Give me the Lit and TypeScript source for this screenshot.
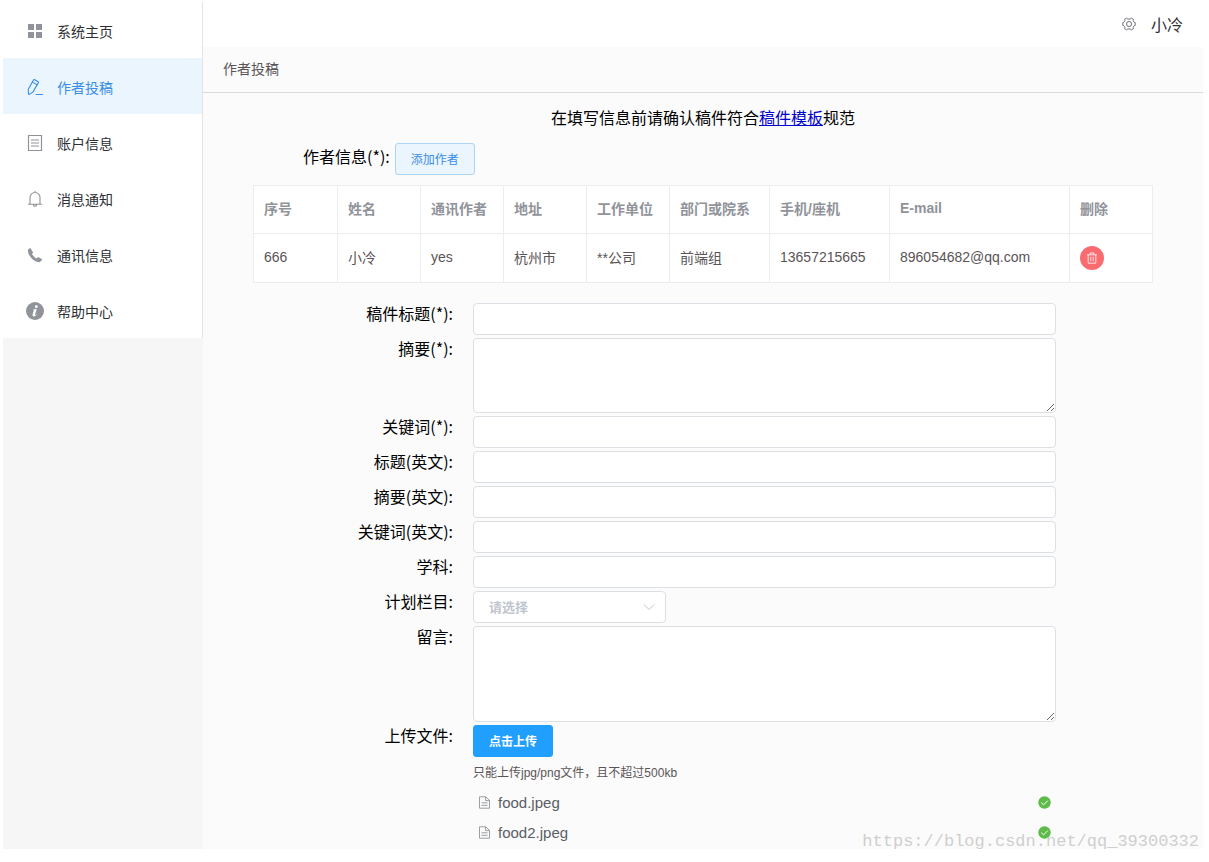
import { LitElement, html, css, svg } from "lit";
import { customElement, state } from "lit/decorators.js";
import { classMap } from "lit/directives/class-map.js";

const icons = {
  menu: svg`<g fill="currentColor"><path d="M2 2h6v6H2zM10 2h6v6h-6zM2 10h6v6H2zM10 10h6v6h-6z"/></g>`,
  edit: svg`<g fill="none" stroke="currentColor" stroke-width="1.100" stroke-linejoin="round" stroke-linecap="round"><path d="M8.400 1.600l3.800 2.200c.3.200.4.500.2.800L6.900 14.100l-3.600 2.200c-.4.200-.7 0-.8-.3L2.200 11.500 7.600 1.800c.2-.3.500-.4.800-.2z"/><path d="M6.400 4.100l4.600 2.700M10 16.500h6.500"/></g>`,
  document: svg`<g fill="none" stroke="currentColor" stroke-width="1.200"><path d="M2.500 1.500h13v15h-13zM5 6h8M5 9h8M5 12h8"/></g>`,
  bell: svg`<g fill="none" stroke="currentColor" stroke-width="1.100" stroke-linecap="round"><path d="M4 14V7.500a5 5 0 0 1 10 0V14M2.300 14.200h13.400M9 2.200V1.200M7.300 14.400a1.700 1.700 0 0 0 3.400 0"/></g>`,
  phone: svg`<path fill="currentColor" d="M3.800 2.200L1.900 3.800C1.600 9.800 7.800 16 13.600 16.200l2.500-2.300c.2-.2.200-.5-.1-.7l-3.400-2c-.2-.1-.5-.1-.7.1l-1.400 1.300C8.700 11.600 6.800 9.700 5.900 7.900l1-1c.2-.2.200-.4.100-.6L4.500 2.300c-.2-.3-.5-.3-.7-.1z"/>`,
  info: svg`<circle cx="9" cy="9" r="9" fill="currentColor"/><g fill="#fff"><circle cx="10.300" cy="4.700" r="1.400"/><path d="M7 7.400l3.700-.5-1.600 5.700c-.2.800.3.800 1.500-.4l.4.400c-1.200 1.400-2.300 2-3.300 1.900-1-.1-1.400-.8-1.100-1.900l1.200-4.200c.1-.4-.1-.5-.9-.6z"/></g>`,
};

const menuItems: { icon: keyof typeof icons; label: string }[] = [
  { icon: "menu", label: "系统主页" },
  { icon: "edit", label: "作者投稿" },
  { icon: "document", label: "账户信息" },
  { icon: "bell", label: "消息通知" },
  { icon: "phone", label: "通讯信息" },
  { icon: "info", label: "帮助中心" },
];

const columns = ["序号", "姓名", "通讯作者", "地址", "工作单位", "部门或院系", "手机/座机", "E-mail", "删除"];

@customElement("app-root")
export class AppRoot extends LitElement {
  @state() private active = "作者投稿";
  @state() private authors = [
    ["666", "小冷", "yes", "杭州市", "**公司", "前端组", "13657215665", "896054682@qq.com"],
  ];
  private files = ["food.jpeg", "food2.jpeg"];

  static styles = css`
    * { box-sizing: border-box; }
    :host {
      display: block;
      font-family: "Liberation Sans", "Noto Sans CJK SC", sans-serif;
      font-size: 14px;
      color: #000;
      background: #fff;
    }
    .page {
      position: relative;
      display: flex;
      min-height: 100vh;
      padding: 2px 6px 13px 3px;
    }
    .sidebar { flex: none; width: 200px; background: #f6f6f6; }
    .menu { background: #fff; border-right: 1px solid #e4e4e6; }
    .menu-item {
      display: flex;
      align-items: center;
      gap: 10px;
      width: 100%;
      height: 56px;
      padding: 2px 20px 0;
      border: 0;
      background: none;
      font: inherit;
      color: #2d2f33;
      cursor: pointer;
    }
    .menu-icon { display: flex; justify-content: center; width: 24px; color: #909399; }
    .active, .active .menu-icon { color: #3a8ee6; }
    .active { background: #eaf5fe; }
    .main { flex: 1; min-width: 0; background: #fbfbfb; }
    .header {
      display: flex;
      align-items: center;
      justify-content: flex-end;
      gap: 15px;
      height: 45px;
      padding: 0 20px 2px;
      background: #fff;
      color: #2d2f33;
      font-size: 16px;
    }
    .crumb {
      margin: 0;
      padding: 0 20px;
      line-height: 45px;
      font-size: 14px;
      font-weight: 400;
      color: #5a5456;
      border-bottom: 1px solid #d9dadc;
    }
    .content { padding: 14px 50px 0; }
    .notice { margin: 0 0 12px; text-align: center; font-size: 16px; line-height: 24px; }
    .notice a { color: #0000cc; text-decoration: underline; }
    .label { font-family: "Noto Sans CJK SC", sans-serif; font-size: 16px; line-height: 20px; }
    .author-bar { display: flex; gap: 5px; padding-left: 50px; margin-bottom: 10px; }
    .author-bar .label { line-height: 26px; }
    .button {
      height: 32px;
      padding: 0 15px 2px;
      border-radius: 3px;
      font: inherit;
      font-size: 12px;
      cursor: pointer;
    }
    .plain { color: #3a8ee6; background: #eaf5fe; border: 1px solid #add4f2; }
    .primary { color: #fff; background: #209fff; border: 1px solid #209fff; font-weight: 700; }
    .table {
      width: 100%;
      table-layout: fixed;
      border-collapse: collapse;
      margin-bottom: 20px;
      background: #fff;
      color: #5a5456;
    }
    .table th, .table td {
      height: 49px;
      padding: 0 10px 3px;
      border: 1px solid #ebeef0;
      text-align: left;
      white-space: nowrap;
    }
    .table th { height: 48px; color: #909399; font-weight: 700; }
    .table .action { padding-bottom: 0; }
    .col-index { width: 84px; }
    .col-dept { width: 100px; }
    .col-phone { width: 120px; }
    .col-mail { width: 180px; }
    .remove {
      display: flex;
      align-items: center;
      justify-content: center;
      width: 24px;
      height: 24px;
      padding: 0;
      border: 0;
      border-radius: 50%;
      background: #fa6b70;
      color: #fff;
      cursor: pointer;
    }
    .form {
      display: grid;
      grid-template-columns: 200px minmax(0, 1fr);
      gap: 3px 20px;
      align-items: start;
      padding-right: 97px;
    }
    .form .label { text-align: right; }
    .field {
      display: block;
      width: 100%;
      height: 32px;
      padding: 0 15px;
      border: 1px solid #dcdfe4;
      border-radius: 4px;
      background: #fff;
      font: inherit;
      outline: none;
    }
    .field:focus { border-color: #409eff; }
    textarea.field { padding: 5px 15px; resize: vertical; }
    .field.abstract { height: 75px; }
    .field.message { height: 96px; }
    .select { position: relative; width: 193px; }
    .select .field { appearance: none; color: #c0c4cc; font-size: 13px; font-weight: 700; }
    .select svg { position: absolute; right: 11px; top: 10px; color: #c0c4cc; pointer-events: none; }
    .hint { margin: 7px 0 6px; font-size: 12px; line-height: 18px; color: #5a5456; }
    .files { list-style: none; margin: 0; padding: 0; }
    .file {
      display: flex;
      align-items: center;
      gap: 7px;
      height: 30px;
      padding: 0 5px 2px;
      font-size: 15px;
      color: #5a5e66;
    }
    .file .done { margin-left: auto; }
    .watermark {
      position: absolute;
      right: 10px;
      bottom: 10px;
      font-family: "Liberation Mono", monospace;
      font-size: 17px;
      line-height: 20px;
      color: #cfcfcf;
      pointer-events: none;
    }
  `;

  private removeAuthor(index: number) {
    this.authors = this.authors.filter((_, i) => i !== index);
  }

  private input(id: string, label: string) {
    return html`<label class="label" for=${id}>${label}:</label><input class="field" id=${id} type="text" />`;
  }

  render() {
    return html`
      <div class="page">
        <aside class="sidebar">
          <nav class="menu">
            ${menuItems.map(
              (m) => html`<button
                class=${classMap({ "menu-item": true, active: m.label === this.active })}
                @click=${() => (this.active = m.label)}
              >
                <span class="menu-icon"><svg width="18" height="18" viewBox="0 0 18 18" aria-hidden="true">${icons[m.icon]}</svg></span>
                <span>${m.label}</span>
              </button>`
            )}
          </nav>
        </aside>
        <main class="main">
          <header class="header">
            <svg width="14" height="14" viewBox="0 0 14 14" fill="none" stroke="#5a5e66" stroke-width="0.900" stroke-linejoin="round" aria-hidden="true">
              <path d="M4.600 1.100C5.500 2.500 8.500 2.500 9.400 1.100L11.400 2.300C10.700 3.800 11.500 5.400 13.200 5.700V8.300C11.500 8.600 10.700 10.200 11.400 11.700L9.400 12.900C8.500 11.500 5.500 11.500 4.600 12.900L2.600 11.700C3.300 10.200 2.500 8.600.8 8.300V5.700C2.500 5.400 3.300 3.800 2.600 2.300Z" />
              <circle cx="7" cy="7" r="2.500" />
            </svg>
            <span>小冷</span>
          </header>
          <h1 class="crumb">作者投稿</h1>
          <div class="content">
            <p class="notice">在填写信息前请确认稿件符合<a href="#template">稿件模板</a>规范</p>
            <div class="author-bar">
              <span class="label">作者信息(*):</span>
              <button class="button plain">添加作者</button>
            </div>
            <table class="table">
              <colgroup>
                <col class="col-index" /><col /><col /><col /><col />
                <col class="col-dept" /><col class="col-phone" /><col class="col-mail" /><col />
              </colgroup>
              <thead>
                <tr>${columns.map((c) => html`<th scope="col">${c}</th>`)}</tr>
              </thead>
              <tbody>
                ${this.authors.map(
                  (row, i) => html`<tr>
                    ${row.map((cell) => html`<td>${cell}</td>`)}
                    <td class="action">
                      <button class="remove" aria-label="删除" @click=${() => this.removeAuthor(i)}>
                        <svg width="12" height="12" viewBox="0 0 12 12" fill="none" stroke="currentColor" stroke-width="0.800" aria-hidden="true">
                          <path d="M1 2.800h10M4 2.800V1h4v1.800M2.200 2.800v8.400h7.600V2.800M4.800 4.800v4.400M7.200 4.800v4.400" />
                        </svg>
                      </button>
                    </td>
                  </tr>`
                )}
              </tbody>
            </table>
            <form class="form" @submit=${(e: Event) => e.preventDefault()}>
              ${this.input("title", "稿件标题(*)")}
              <label class="label" for="abstract">摘要(*):</label>
              <textarea class="field abstract" id="abstract"></textarea>
              ${this.input("keywords", "关键词(*)")}
              ${this.input("title-en", "标题(英文)")}
              ${this.input("abstract-en", "摘要(英文)")}
              ${this.input("keywords-en", "关键词(英文)")}
              ${this.input("subject", "学科")}
              <label class="label" for="column">计划栏目:</label>
              <div class="select">
                <select class="field" id="column"><option>请选择</option></select>
                <svg width="12" height="12" viewBox="0 0 12 12" fill="none" stroke="currentColor" aria-hidden="true"><path d="M1 3.500l5 5 5-5" /></svg>
              </div>
              <label class="label" for="message">留言:</label>
              <textarea class="field message" id="message"></textarea>
              <label class="label" for="upload">上传文件:</label>
              <div>
                <button class="button primary" id="upload" type="button">点击上传</button>
                <p class="hint">只能上传jpg/png文件，且不超过500kb</p>
                <ul class="files">
                  ${this.files.map(
                    (f) => html`<li class="file">
                      <svg width="13" height="13" viewBox="0 0 13 13" fill="none" stroke="#909399" stroke-width="0.900" aria-hidden="true">
                        <path d="M1.500.8h6.300l3.700 3.600v7.800h-10zM7.600.8v3.800h3.900M3.500 6.800h6M3.500 9.300h6" />
                      </svg>
                      <span>${f}</span>
                      <svg class="done" width="13" height="13" viewBox="0 0 13 13" aria-hidden="true">
                        <circle cx="6.500" cy="6.500" r="6.200" fill="#5dbb49" />
                        <path d="M3.300 6.700l2.300 2.200 4.200-4.300" fill="none" stroke="#fff" stroke-width="1" />
                      </svg>
                    </li>`
                  )}
                </ul>
              </div>
            </form>
          </div>
        </main>
        <div class="watermark">https://blog.csdn.net/qq_39300332</div>
      </div>
    `;
  }
}
